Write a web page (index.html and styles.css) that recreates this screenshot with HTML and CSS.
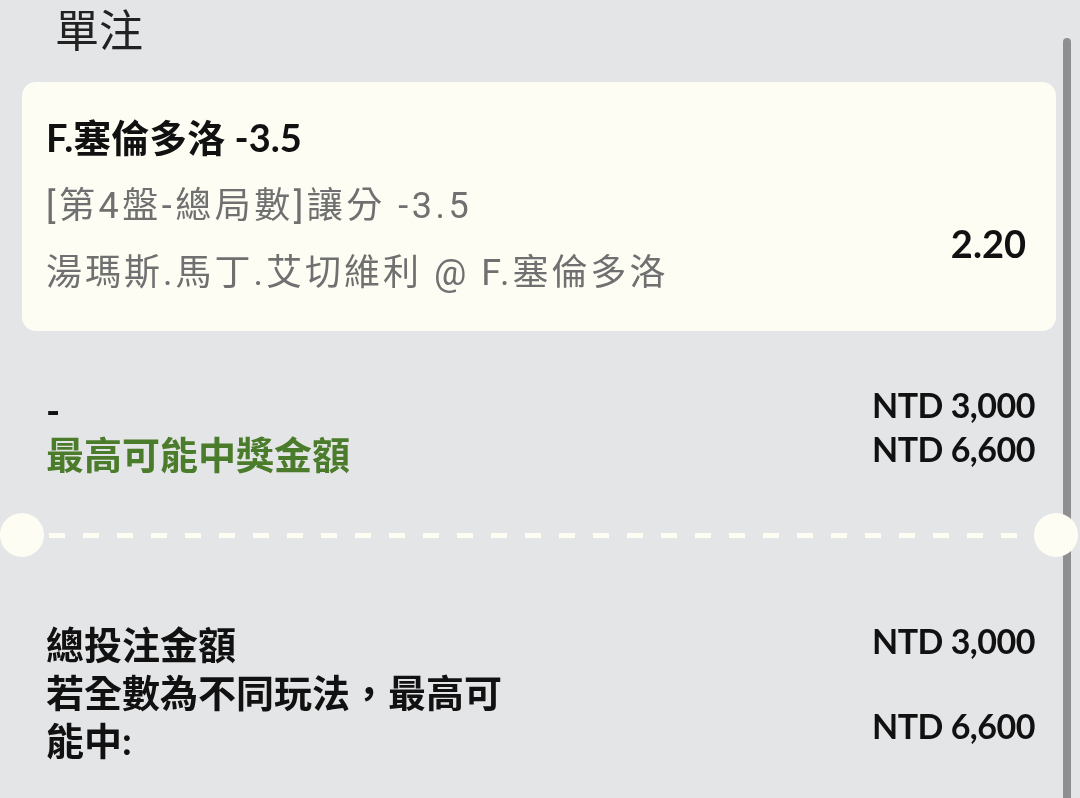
FILE: index.html
```html
<!DOCTYPE html>
<html lang="zh-Hant">
<head>
<meta charset="utf-8">
<title>單注</title>
<link rel="stylesheet" href="styles.css">
</head>
<body>
<div class="page">
  <h1 class="title">單注</h1>

  <div class="bet-card">
    <div class="bet-info">
      <div class="bet-pick">F.塞倫多洛 -3.5</div>
      <div class="bet-market">[第4盤-總局數]讓分 -3.5</div>
      <div class="bet-event">湯瑪斯.馬丁.艾切維利 @ F.塞倫多洛</div>
    </div>
    <div class="bet-odds">2.20</div>
  </div>

  <div class="stake-summary">
    <div class="labels">
      <div class="label">-</div>
      <div class="label label-green">最高可能中獎金額</div>
    </div>
    <div class="amounts">
      <div class="amount">NTD 3,000</div>
      <div class="amount">NTD 6,600</div>
    </div>
  </div>

  <div class="divider">
    <span class="notch"></span>
    <span class="dash"></span>
    <span class="notch"></span>
  </div>

  <div class="totals">
    <div class="labels">
      <div class="label">總投注金額</div>
      <div class="label label-wrap">若全數為不同玩法，最高可能中:</div>
    </div>
    <div class="amounts">
      <div class="amount">NTD 3,000</div>
      <div class="amount">NTD 6,600</div>
    </div>
  </div>
</div>
<div class="scrollbar"></div>
</body>
</html>
```

FILE: styles.css
```css
html, body {
  margin: 0;
  padding: 0;
}

body {
  background: #e4e5e7;
  font-family: Lato, "Noto Sans CJK TC", sans-serif;
  color: #111;
  height: 798px;
  overflow: hidden;
}

.page {
  padding: 0 24px 0 22px;
  position: relative;
  z-index: 1;
}

.title {
  margin: 0 0 22px 0;
  padding-left: 33px;
  font-size: 44px;
  font-weight: 400;
  line-height: 60px;
  color: #222;
}

.bet-card {
  display: flex;
  justify-content: space-between;
  background: #fdfdf4;
  border-radius: 14px;
  padding: 20px 30px 24px 24px;
  height: 249px;
  box-sizing: border-box;
}

.bet-pick {
  font-size: 38px;
  font-weight: 700;
  line-height: 71px;
  color: #111;
}

.bet-market,
.bet-event {
  font-family: Roboto, "Noto Sans CJK TC", sans-serif;
  font-size: 36px;
  line-height: 67px;
  color: #707070;
  letter-spacing: 3px;
  white-space: nowrap;
}

.bet-market {
  letter-spacing: 3.5px;
}

.bet-odds {
  padding-top: 121px;
  font-size: 38px;
  font-weight: 700;
  line-height: 40px;
}

.stake-summary,
.totals {
  display: flex;
  justify-content: space-between;
  align-items: flex-start;
  padding: 0 21px 0 24px;
}

.stake-summary {
  margin-top: 52px;
}

.stake-summary .labels {
  padding-top: 5px;
}

.totals .labels {
  padding-top: 3px;
}

.label {
  font-size: 38px;
  font-weight: 700;
  line-height: 44px;
}

.label-green {
  color: #4a7c2b;
}

.amounts {
  text-align: right;
}

.amount {
  font-size: 34px;
  font-weight: 700;
  line-height: 44px;
  letter-spacing: -0.5px;
}

.divider {
  display: flex;
  align-items: center;
  margin: 37px -22px 0 -22px;
  height: 44px;
  position: relative;
  z-index: 2;
}

.notch {
  width: 44px;
  height: 44px;
  border-radius: 50%;
  background: #fdfdf4;
  flex: none;
}

.dash {
  flex: 1;
  height: 5px;
  margin: 1px 5px 0 5px;
  background: repeating-linear-gradient(to right, #fdfdf4 0 16px, transparent 16px 34px);
}

.totals {
  margin-top: 60px;
}

.totals .label,
.totals .amount {
  line-height: 48px;
}

.totals .amounts {
  display: flex;
  flex-direction: column;
  gap: 37px;
}

.label-wrap {
  width: 480px;
}

.scrollbar {
  position: fixed;
  top: 38px;
  left: 1063px;
  width: 8px;
  height: 800px;
  border-radius: 4px;
  background: #8f8f92;
  z-index: 0;
}
```
